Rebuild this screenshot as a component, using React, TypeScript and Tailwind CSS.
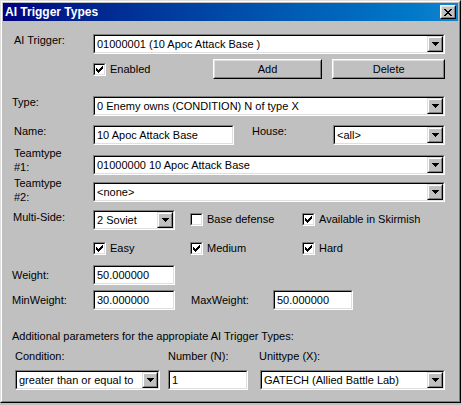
import type { ReactNode } from "react";

const font = "font-['Liberation_Sans',Arial,sans-serif] text-[11px] leading-[13px] text-black";

function Sunken({ className = "", children }: { className?: string; children?: ReactNode }) {
  return (
    <div className={`h-[20px] border border-t-[#808080] border-l-[#808080] border-b-white border-r-white ${className}`}>
      <div className="h-full flex items-center bg-white border border-t-black border-l-black border-b-[#dfdfdf] border-r-[#dfdfdf]">
        {children}
      </div>
    </div>
  );
}

function DropArrow() {
  return (
    <div className="w-[16px] h-full shrink-0 bg-[#c0c0c0] border border-t-[#dfdfdf] border-l-[#dfdfdf] border-b-black border-r-black">
      <div className="h-full flex items-center justify-center border border-t-white border-l-white border-b-[#808080] border-r-[#808080]">
        <svg width="7" height="4" viewBox="0 0 7 4" shapeRendering="crispEdges">
          <rect x="0" y="0" width="7" height="1" fill="black" />
          <rect x="1" y="1" width="5" height="1" fill="black" />
          <rect x="2" y="2" width="3" height="1" fill="black" />
          <rect x="3" y="3" width="1" height="1" fill="black" />
        </svg>
      </div>
    </div>
  );
}

function Combo({ value, className = "" }: { value: string; className?: string }) {
  return (
    <Sunken className={className}>
      <span className="flex-1 pl-[2px] whitespace-nowrap overflow-hidden">{value}</span>
      <DropArrow />
    </Sunken>
  );
}

function Edit({ value, className = "" }: { value: string; className?: string }) {
  return (
    <Sunken className={className}>
      <span className="pl-[2px] whitespace-nowrap">{value}</span>
    </Sunken>
  );
}

function Check({ label, checked, className = "" }: { label: string; checked: boolean; className?: string }) {
  return (
    <div className={`flex items-center h-[13px] ${className}`}>
      <div className="w-[13px] h-[13px] shrink-0 border border-t-[#808080] border-l-[#808080] border-b-white border-r-white">
        <div className="h-full bg-white border border-t-black border-l-black border-b-[#dfdfdf] border-r-[#dfdfdf]">
          {checked && (
            <svg width="9" height="9" viewBox="0 0 9 9" shapeRendering="crispEdges">
              <path d="M1 3v3h1v1h1v1h1v-1h1v-1h1v-1h1v-1h1v-3h-1v1h-1v1h-1v1h-1v1h-1v-1h-1v-1z" fill="black" />
            </svg>
          )}
        </div>
      </div>
      <span className="ml-[4px] whitespace-nowrap">{label}</span>
    </div>
  );
}

function Button({ label, className = "" }: { label: string; className?: string }) {
  return (
    <div className={`h-[20px] bg-[#c0c0c0] border border-t-white border-l-white border-b-black border-r-black ${className}`}>
      <div className="h-full flex items-center justify-center border border-t-[#dfdfdf] border-l-[#dfdfdf] border-b-[#808080] border-r-[#808080]">
        {label}
      </div>
    </div>
  );
}

export default function App() {
  return (
    <div className={`w-[461px] h-[405px] bg-[#c0c0c0] ${font}`}>
      <div className="w-[461px] h-[403px] bg-[#c0c0c0] border border-t-[#dfdfdf] border-l-[#dfdfdf] border-b-black border-r-black">
        <div className="h-full p-px border border-t-white border-l-white border-b-[#808080] border-r-[#808080] flex flex-col">
          {/* title bar */}
          <div className="h-[18px] shrink-0 flex items-center justify-between bg-gradient-to-r from-[#000080] to-[#1084d0] pl-[2px] pr-[2px]">
            <span className="text-white font-bold text-[12px] leading-[14px]">AI Trigger Types</span>
            <div className="w-[16px] h-[14px] bg-[#c0c0c0] border border-t-white border-l-white border-b-black border-r-black">
              <div className="h-full flex items-center justify-center border border-t-[#dfdfdf] border-l-[#dfdfdf] border-b-[#808080] border-r-[#808080]">
                <svg width="8" height="7" viewBox="0 0 8 7" shapeRendering="crispEdges">
                  <path d="M0 0h2v1h1v1h2v-1h1v-1h2v1h-1v1h-1v1h-1v1h1v1h1v1h1v1h-2v-1h-1v-1h-2v1h-1v1h-2v-1h1v-1h1v-1h1v-1h-1v-1h-1v-1h-1z" fill="black" />
                </svg>
              </div>
            </div>
          </div>

          {/* body */}
          <div className="flex flex-col pr-[13px]">
            <div className="flex items-start mt-[13px]">
              <span className="ml-[11px] w-[79px]">AI Trigger:</span>
              <Combo value="01000001 (10 Apoc Attack Base )" className="flex-1" />
            </div>

            <div className="flex items-center mt-[5px] h-[20px]">
              <Check label="Enabled" checked className="ml-[90px] w-[120px]" />
              <Button label="Add" className="w-[110px]" />
              <Button label="Delete" className="w-[113px] ml-[10px]" />
            </div>

            <div className="flex items-start mt-[17px]">
              <span className="ml-[9px] w-[81px]">Type:</span>
              <Combo value="0 Enemy owns (CONDITION) N of type X" className="flex-1" />
            </div>

            <div className="flex items-center mt-[9px]">
              <span className="ml-[11px] w-[79px] self-start">Name:</span>
              <Edit value="10 Apoc Attack Base" className="w-[141px]" />
              <span className="ml-[18px] w-[81px] self-start">House:</span>
              <Combo value="<all>" className="flex-1" />
            </div>

            <div className="flex items-start mt-[1px]">
              <span className="ml-[11px] w-[79px] leading-[14px]">Teamtype<br />#1:</span>
              <Combo value="01000000 10 Apoc Attack Base" className="flex-1 mt-[9px]" />
            </div>

            <div className="flex items-start mt-[1px]">
              <span className="ml-[11px] w-[79px] leading-[14px]">Teamtype<br />#2:</span>
              <Combo value="<none>" className="flex-1 mt-[6px]" />
            </div>

            <div className="flex items-start mt-[6px]">
              <span className="ml-[10px] w-[80px] mt-[1px]">Multi-Side:</span>
              <Combo value="2 Soviet" className="w-[82px]" />
              <Check label="Base defense" checked={false} className="ml-[15px] w-[112px] mt-[3px]" />
              <Check label="Available in Skirmish" checked className="mt-[3px]" />
            </div>

            <div className="flex items-center mt-[12px]">
              <Check label="Easy" checked className="ml-[90px] w-[97px]" />
              <Check label="Medium" checked className="w-[112px]" />
              <Check label="Hard" checked />
            </div>

            <div className="flex items-center mt-[10px]">
              <span className="ml-[9px] w-[81px]">Weight:</span>
              <Edit value="50.000000" className="w-[82px]" />
            </div>

            <div className="flex items-center mt-[5px]">
              <span className="ml-[9px] w-[81px]">MinWeight:</span>
              <Edit value="30.000000" className="w-[82px]" />
              <span className="ml-[16px] w-[82px]">MaxWeight:</span>
              <Edit value="50.000000" className="w-[80px]" />
            </div>

            <div className="mt-[20px] ml-[9px]">Additional parameters for the appropiate AI Trigger Types:</div>

            <div className="flex mt-[7px]">
              <span className="ml-[12px] w-[153px]">Condition:</span>
              <span className="w-[91px]">Number (N):</span>
              <span>Unittype (X):</span>
            </div>

            <div className="flex mt-[7px]">
              <Combo value="greater than or equal to" className="ml-[12px] w-[145px]" />
              <Edit value="1" className="ml-[8px] w-[80px]" />
              <Combo value="GATECH (Allied Battle Lab)" className="ml-[12px] flex-1" />
            </div>
          </div>
        </div>
      </div>
    </div>
  );
}
